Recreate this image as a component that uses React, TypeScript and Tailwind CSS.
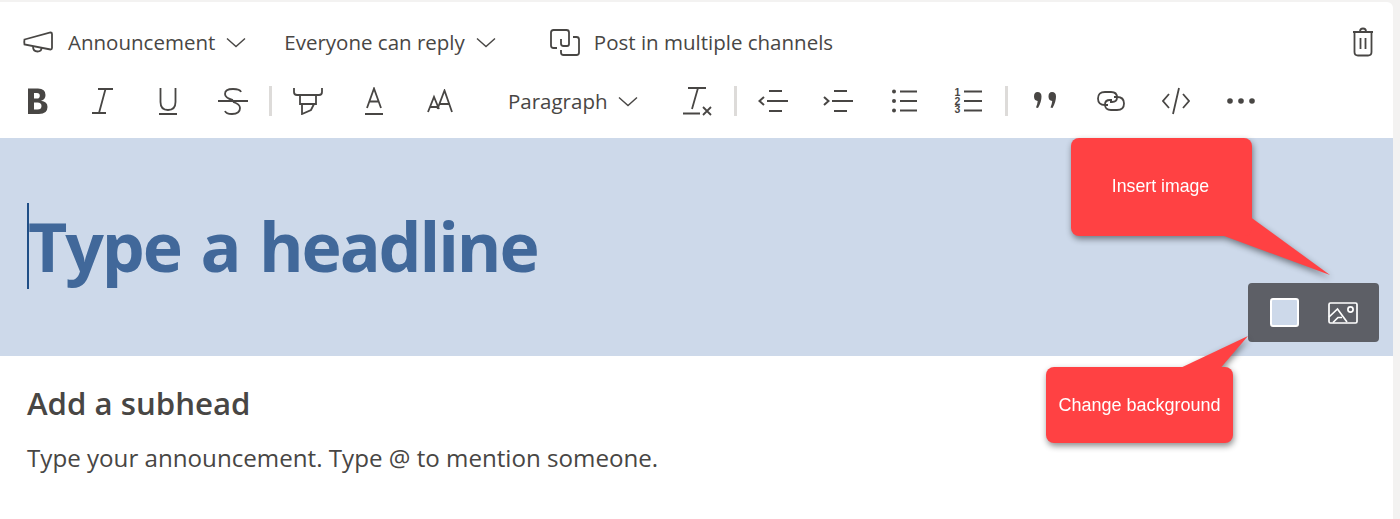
import React from 'react';

const ink = '#484644';

const Svg: React.FC<{ w: number; h: number; className?: string; children: React.ReactNode }> = ({ w, h, className, children }) => (
  <svg width={w} height={h} viewBox={`0 0 ${w} ${h}`} fill="none" stroke={ink} strokeWidth={1.8} className={`shrink-0 ${className ?? ''}`}>
    {children}
  </svg>
);

const Chevron: React.FC<{ className: string }> = ({ className }) => (
  <Svg w={20} h={11} className={className}>
    <path d="M1 1.5 L10 9.5 L19 1.5" strokeWidth={1.4} />
  </Svg>
);

const Sep: React.FC<{ className: string }> = ({ className }) => <div className={`h-[30px] w-[3px] shrink-0 bg-[#dddbd9] ${className}`} />;

const Toolbar: React.FC = () => (
  <div className="flex h-[136px] shrink-0 flex-col text-[#484644]">
    {/* Top row */}
    <div className="flex h-[55px] shrink-0 items-end pl-[23px] text-[20.5px] leading-[30px]">
      <div className="flex h-[30px] items-center">
        <Svg w={30} h={22}>
          <path d="M1.5 8.5 L27.5 1.5 Q29 1.5 29 3 V17 Q29 18.5 27.5 18.5 L1.5 13.5 Q1 11 1.5 8.5 Z" />
          <path d="M10 15.5 Q10 20.5 14.5 20.5 Q18.5 20.5 18.5 17" />
        </Svg>
        <span className="ml-[15px]">Announcement</span>
        <Chevron className="ml-[11px]" />
        <span className="ml-[38px]">Everyone can reply</span>
        <Chevron className="ml-[11px]" />
        <Svg w={30} h={27} className="ml-[54px]">
          <path d="M7 19 H3.5 Q1 19 1 16.5 V3.5 Q1 1 3.5 1 H16.5 Q19 1 19 3.5 V15 Q19 17 17 17 H13.5 Q11 17 11 14.5 V10" />
          <path d="M23 8 H26.5 Q29 8 29 10.5 V23.5 Q29 26 26.5 26 H13.5 Q11 26 11 23.5 V21" />
        </Svg>
        <span className="ml-[14px]">Post in multiple channels</span>
        <Svg w={22} h={30} className="ml-[519px]">
          <path d="M1 5 H21 M8 4.5 Q8 1.5 11 1.5 Q14 1.5 14 4.5" />
          <path d="M2.5 6 V25 Q2.5 28.5 6 28.5 H16 Q19.5 28.5 19.5 25 V6" />
          <path d="M8.5 11 V22 M13.5 11 V22" />
        </Svg>
      </div>
    </div>
    {/* Format row */}
    <div className="mt-[28px] flex h-[32px] shrink-0 items-center pl-[27px] text-[20.5px]">
      <Svg w={21} h={28}>
        <path d="M1 1.5 H11 Q18.5 1.5 18.5 8 Q18.5 12.5 14 13.7 Q20.5 14.5 20.5 20 Q20.5 27 12 27 H1 Z M7 6 V11.5 H10 Q12.8 11.5 12.8 8.7 Q12.8 6 10 6 Z M7 15.5 V22.5 H10.5 Q14.5 22.5 14.5 19 Q14.5 15.5 10.5 15.5 Z" fill={ink} fillRule="evenodd" stroke="none" />
      </Svg>
      <Svg w={23} h={26} className="ml-[43px]">
        <path d="M7 1 H22 M14.5 1 L8 25 M1 25 H15" />
      </Svg>
      <Svg w={18} h={28} className="ml-[45px]">
        <path d="M1.5 1 V15 Q1.5 23 9 23 Q16.5 23 16.5 15 V1 M0 27 H18" />
      </Svg>
      <Svg w={30} h={28} className="ml-[41px]">
        <path d="M23 5 Q22 2 15 2 Q7 2 7 7 Q7 11 15 13 M0 14 H30 M15 15 Q22 17 22 21 Q22 27 14 27 Q8 27 7 24" />
      </Svg>
      <Sep className="ml-[21px]" />
      <Svg w={30} h={28} className="ml-[21px]">
        <path d="M1 1 V5 Q1 8 4 8 H26 Q29 8 29 5 V1 M7 8 V17 H23 V8 M9 17 V27 L18 23 L21 17" />
      </Svg>
      <Svg w={18} h={28} className="ml-[42px]">
        <path d="M2 21 L9 1.5 L16 21 M4.5 14.5 H13.5 M0 27 H18" />
      </Svg>
      <Svg w={26} h={24} className="ml-[44px]">
        <path d="M1 23 L7 8 L12 20 M3 18 H10.5 M10.5 20 L17.5 1.5 L25 23 M13 15 H23" />
      </Svg>
      <span className="ml-[55px]">Paragraph</span>
      <Chevron className="ml-[10px]" />
      <Svg w={30} h={30} className="ml-[45px]">
        <path d="M5 2 H23 M15 2 L9 23 M0 27.5 H17 M20 21 L28 29 M28 21 L20 29" />
      </Svg>
      <Sep className="ml-[21px]" />
      <Svg w={30} h={24} className="ml-[21px]">
        <path d="M6 8 L1.5 12 L6 16" strokeWidth={2} />
        <path d="M11 2 H24 M9 12 H30 M11 22 H24" />
      </Svg>
      <Svg w={30} h={24} className="ml-[35px]">
        <path d="M1 8 L5.5 12 L1 16" strokeWidth={2} />
        <path d="M11 2 H24 M9 12 H30 M11 22 H24" />
      </Svg>
      <Svg w={25} h={24} className="ml-[39px]">
        <circle cx={2} cy={2.5} r={2} fill={ink} stroke="none" />
        <circle cx={2} cy={12} r={2} fill={ink} stroke="none" />
        <circle cx={2} cy={21.5} r={2} fill={ink} stroke="none" />
        <path d="M8 2.5 H25 M8 12 H25 M8 21.5 H25" />
      </Svg>
      <div className="ml-[38px] flex h-[26px] w-[27px] shrink-0 items-center">
        <div className="w-[8px] shrink-0 font-['Liberation_Sans',sans-serif] text-[10.5px] leading-[8.6px] font-bold break-all">1 2 3</div>
        <Svg w={18} h={24} className="ml-px">
          <path d="M0 2.5 H18 M0 12 H18 M0 21.5 H18" />
        </Svg>
      </div>
      <Sep className="ml-[23px]" />
      <Svg w={24} h={22} className="ml-[25px]">
        <path d="M4.5 2 Q8.5 2 8.5 6.5 Q8.5 12 5 18 L3 17.5 Q4.5 14 4.7 11 Q1 10.7 1 6.5 Q1 2 4.5 2 Z M19 2 Q23 2 23 6.5 Q23 12 19.5 18 L17.5 17.5 Q19 14 19.2 11 Q15.5 10.7 15.5 6.5 Q15.5 2 19 2 Z" fill={ink} stroke="none" />
      </Svg>
      <Svg w={28} h={22} className="ml-[40px]">
        <path d="M11 15 H8 Q1 15 1 8.5 Q1 2 8 2 H14 Q20 2 20 7.5 Q20 12 15 12 H13" />
        <path d="M17 7 H20 Q27 7 27 13.5 Q27 20 20 20 H14 Q8 20 8 14.5 Q8 10 13 10 H15" />
      </Svg>
      <Svg w={28} h={28} className="ml-[37px]">
        <path d="M7 7 L1 14 L7 21 M21 7 L27 14 L21 21 M17 1 L11 27" />
      </Svg>
      <Svg w={28} h={6} className="ml-[37px]">
        <circle cx={3} cy={3} r={2.8} fill={ink} stroke="none" />
        <circle cx={14} cy={3} r={2.8} fill={ink} stroke="none" />
        <circle cx={25} cy={3} r={2.8} fill={ink} stroke="none" />
      </Svg>
    </div>
  </div>
);

const Banner: React.FC = () => (
  <div className="relative h-[218px] shrink-0 bg-[#cdd9ea]">
    <div className="flex h-full items-center pl-[27px] pb-[2px]">
      <div className="h-[86px] w-[2px] shrink-0 self-center bg-[#1f4e86]" />
      <h1 className="ml-[-1px] text-[68px] leading-[90px] font-bold tracking-[-2.1px] [word-spacing:4px] text-[#41689a]">Type a headline</h1>
    </div>
    {/* Image / background picker */}
    <div className="absolute top-[145px] left-[1248px] flex h-[59px] w-[131px] items-center rounded-[4px] bg-[#5d5f66] pl-[22px]">
      <div className="h-[29px] w-[29px] rounded-[3px] border-2 border-white bg-[#cdd9ea]" />
      <svg width={30} height={22} viewBox="0 0 30 22" fill="none" stroke="white" strokeWidth={1.7} className="ml-[29px]">
        <rect x={1} y={1} width={28} height={20} rx={1.5} />
        <path d="M1 15 L9.5 7 L19 20 M5 20.5 L10 15.5 H14" />
        <circle cx={22.5} cy={7.5} r={2.6} />
      </svg>
    </div>
  </div>
);

const App: React.FC = () => (
  <div className="relative h-[519px] w-[1400px] overflow-hidden bg-[#f3f2f1] pt-[2px] font-['Open_Sans','Noto_Sans',sans-serif]">
    <div className="flex h-[517px] w-[1393px] flex-col rounded-tr-[6px] bg-white">
      <Toolbar />
      <Banner />
      <div className="pt-[24px] pl-[27px] text-[#484644]">
        <h2 className="text-[31.2px] leading-[46px] font-semibold">Add a subhead</h2>
        <p className="mt-[14px] text-[24.15px] leading-[36px]">Type your announcement. Type @ to mention someone.</p>
      </div>
    </div>

    {/* Red annotations */}
    <div className="absolute top-[138px] left-[1071px] drop-shadow-[1px_3px_3px_rgba(0,0,0,0.45)]">
      <svg width={262} height={140} viewBox="0 0 262 140" className="absolute top-0 left-0">
        <path d="M145 95 L259 137 L178 78 Z" fill="#ff4143" />
      </svg>
      <div className="relative flex h-[98px] w-[181px] items-start justify-center rounded-[8px] bg-[#ff4143] pt-[37px] pr-[2px] font-['Liberation_Sans',sans-serif] text-[17.7px] leading-[22px] text-white">
        Insert image
      </div>
    </div>
    <div className="absolute top-[367px] left-[1046px] drop-shadow-[1px_3px_3px_rgba(0,0,0,0.45)]">
      <svg width={210} height={40} viewBox="0 0 210 40" className="absolute top-[-32px] left-0">
        <path d="M128 36 L202 1 L172 36 Z" fill="#ff4143" />
      </svg>
      <div className="relative flex h-[76px] w-[187px] items-start justify-center rounded-[8px] bg-[#ff4143] pt-[27px] font-['Liberation_Sans',sans-serif] text-[18px] leading-[22px] text-white">
        Change background
      </div>
    </div>
  </div>
);

export default App;
